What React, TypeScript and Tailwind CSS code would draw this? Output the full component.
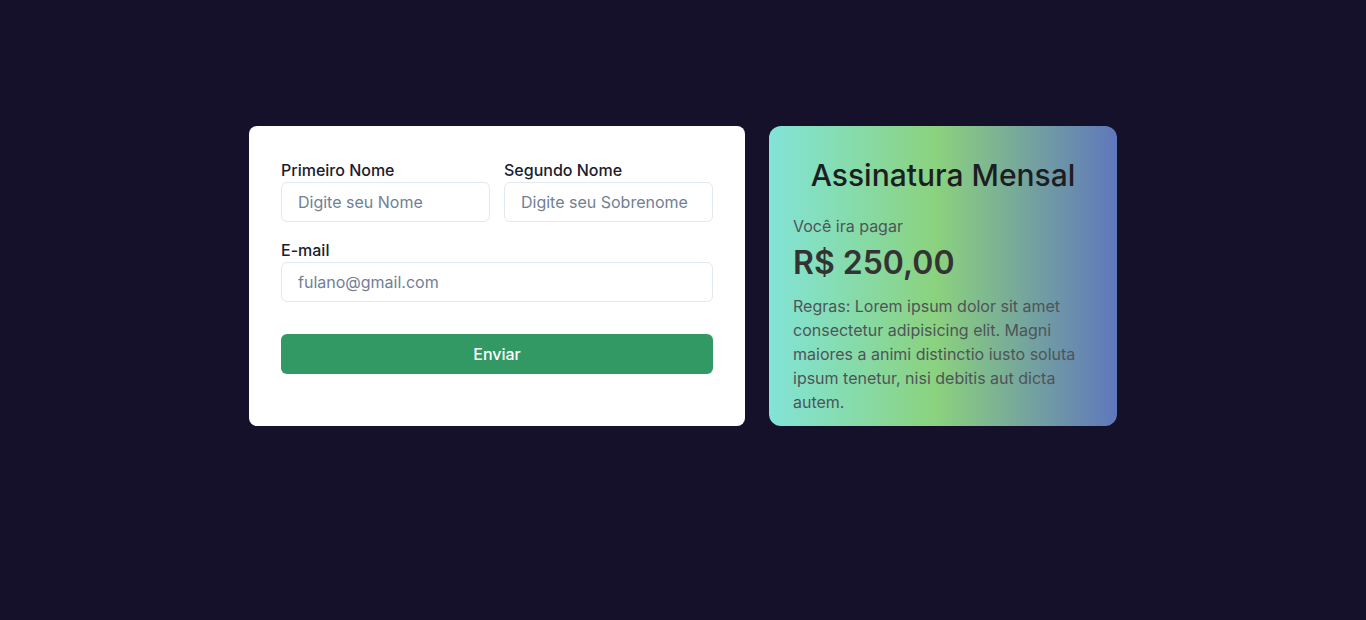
export default function App() {
  return (
    <div
      className="min-h-screen bg-[#16112a] pt-[126px]"
      style={{ fontFamily: 'Inter, "Noto Sans", sans-serif' }}
    >
      <div className="mx-auto flex w-[868px] gap-6">
        {/* formulário */}
        <form className="h-[300px] w-[496px] rounded-lg bg-white px-8 pt-8">
          <div className="flex gap-[14px]">
            <div className="flex-1">
              <label className="block text-base leading-6 font-medium text-[#1a202c]">
                Primeiro Nome
              </label>
              <input
                placeholder="Digite seu Nome"
                className="h-10 w-full rounded-md border border-[#e2e8f0] px-4 text-base text-[#1a202c] outline-none placeholder:text-[#718096]"
              />
            </div>
            <div className="flex-1">
              <label className="block text-base leading-6 font-medium text-[#1a202c]">
                Segundo Nome
              </label>
              <input
                placeholder="Digite seu Sobrenome"
                className="h-10 w-full rounded-md border border-[#e2e8f0] px-4 text-base text-[#1a202c] outline-none placeholder:text-[#718096]"
              />
            </div>
          </div>
          <div className="mt-4">
            <label className="block text-base leading-6 font-medium text-[#1a202c]">
              E-mail
            </label>
            <input
              placeholder="fulano@gmail.com"
              className="h-10 w-full rounded-md border border-[#e2e8f0] px-4 text-base text-[#1a202c] outline-none placeholder:text-[#718096]"
            />
          </div>
          <button
            type="button"
            className="mt-8 h-10 w-full rounded-md bg-[#329964] text-base font-medium text-white"
          >
            Enviar
          </button>
        </form>

        {/* resumo */}
        <div className="h-[300px] w-[348px] rounded-xl bg-[linear-gradient(to_right,#82e4d8_0%,#8bd27e_48%,#5f77bc_100%)] px-6 pt-[31px]">
          <h2 className="text-center text-[30px] leading-9 font-medium text-[#1c1e22]">
            Assinatura Mensal
          </h2>
          <p className="mt-[21px] text-base leading-6 text-[#4d5558]">Você ira pagar</p>
          <p className="mt-[5px] text-[32px] leading-10 font-semibold text-[#333333]">R$ 250,00</p>
          <p className="mt-[11px] text-base leading-6 text-[#4d5558]">
            Regras: Lorem ipsum dolor sit amet consectetur adipisicing elit. Magni maiores a animi
            distinctio iusto soluta ipsum tenetur, nisi debitis aut dicta autem.
          </p>
        </div>
      </div>
    </div>
  );
}
